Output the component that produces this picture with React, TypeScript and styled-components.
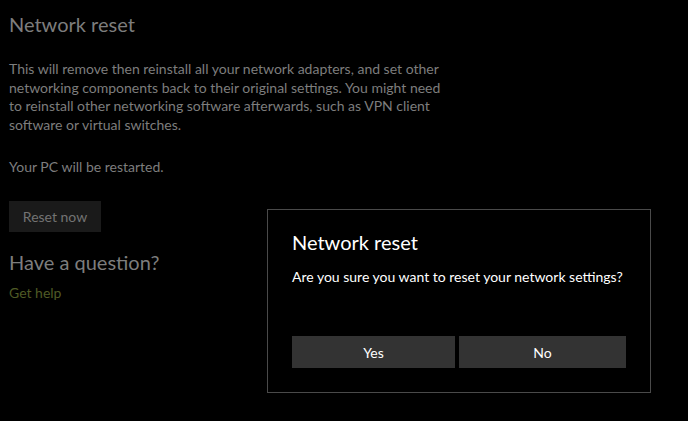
import React from "react";
import styled, { createGlobalStyle } from "styled-components";

const Global = createGlobalStyle`
  html, body { margin: 0; padding: 0; background: #000; }
  body { font-family: "Lato", "Open Sans", "Liberation Sans", sans-serif; }
  * { box-sizing: border-box; }
`;

const Screen = styled.div`
  position: relative;
  width: 688px;
  height: 421px;
  overflow: hidden;
  background: #000;
  padding: 10px 8px 0 9px;
`;

const Heading = styled.h2<{ $gap?: number }>`
  margin: ${(p) => p.$gap ?? 0}px 0 0 0;
  font-size: 20px;
  line-height: 28px;
  font-weight: 400;
  color: #7d7d7d;
`;

const Para = styled.p<{ $gap: number }>`
  margin: ${(p) => p.$gap}px 0 0 0;
  width: 437px;
  font-size: 14px;
  line-height: 18.5px;
  color: #7d7d7d;
`;

const GhostButton = styled.button`
  display: flex;
  align-items: center;
  justify-content: center;
  margin-top: 24px;
  width: 92px;
  height: 31px;
  border: none;
  background: #1a1a1a;
  color: #737373;
  font-family: inherit;
  font-size: 14px;
  padding: 0;
`;

const Link = styled.a`
  display: block;
  margin-top: 8px;
  font-size: 14px;
  line-height: 18.5px;
  color: #4f5a25;
  text-decoration: none;
`;

const Dialog = styled.div`
  position: absolute;
  left: 267px;
  top: 209px;
  width: 384px;
  height: 184px;
  border: 1px solid #4a4a4a;
  background: #000;
  padding: 18px 24px 24px 24px;
  display: flex;
  flex-direction: column;
`;

const DialogTitle = styled.h3`
  margin: 0;
  font-size: 20px;
  line-height: 28px;
  font-weight: 400;
  color: #fff;
`;

const DialogText = styled.p`
  margin: 12px 0 0 0;
  font-size: 14px;
  line-height: 18.5px;
  color: #fff;
`;

const ButtonRow = styled.div`
  margin-top: auto;
  display: grid;
  grid-template-columns: 163px 1fr;
  gap: 4px;
`;

const DialogButton = styled.button`
  height: 32px;
  border: none;
  background: #333333;
  color: #fff;
  font-family: inherit;
  font-size: 14px;
  padding: 0;
`;

export default function App() {
  return (
    <>
      <Global />
      <Screen>
        <Heading>Network reset</Heading>
        <Para $gap={22}>
          This will remove then reinstall all your network adapters, and set other
          networking components back to their original settings. You might need
          to reinstall other networking software afterwards, such as VPN client
          software or virtual switches.
        </Para>
        <Para $gap={24}>Your PC will be restarted.</Para>
        <GhostButton>Reset now</GhostButton>
        <Heading $gap={16}>Have a question?</Heading>
        <Link href="#">Get help</Link>
        <Dialog>
          <DialogTitle>Network reset</DialogTitle>
          <DialogText>Are you sure you want to reset your network settings?</DialogText>
          <ButtonRow>
            <DialogButton>Yes</DialogButton>
            <DialogButton>No</DialogButton>
          </ButtonRow>
        </Dialog>
      </Screen>
    </>
  );
}
